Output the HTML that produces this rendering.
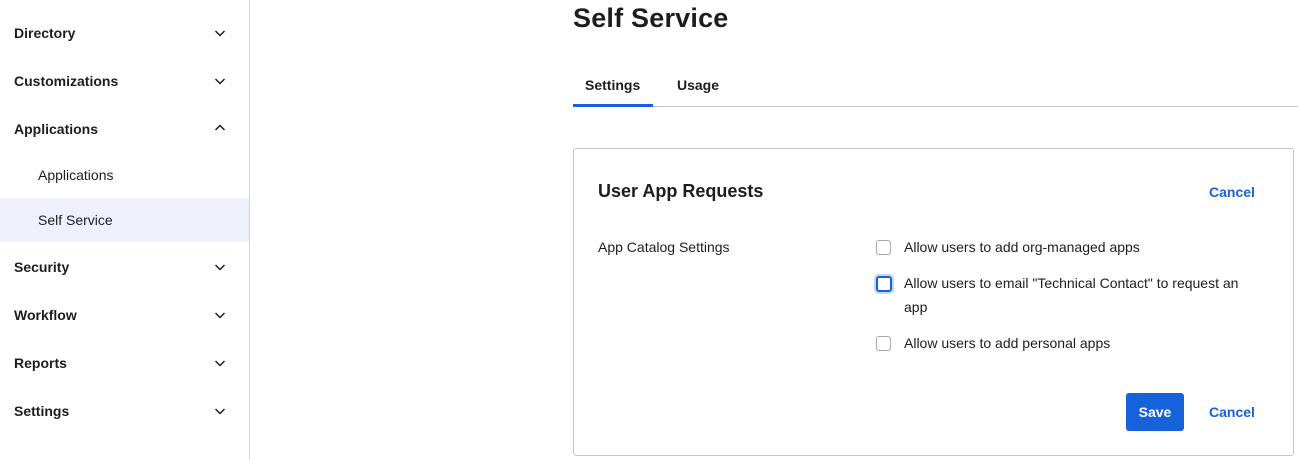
<!DOCTYPE html><html><head><style>
body{margin:0;width:1298px;height:460px;overflow:hidden;background:#fff;font-family:"Liberation Sans",sans-serif;color:#1d1d21;position:relative}
.sb{position:absolute;left:0;top:0;width:249px;height:460px;border-right:1px solid #d7d7dc}
.it{position:absolute;left:14px;font-size:14px;font-weight:bold}
.sub{position:absolute;left:38px;font-size:14px}
.ch{position:absolute;left:214px;width:12px;height:8px}
.a{position:absolute}
.cb{position:absolute;left:876px;width:13px;height:13px;border:1.5px solid #a7a7b0;border-radius:3px}
.lbl{position:absolute;left:904px;font-size:14px;line-height:24px;width:360px}
</style></head><body>
<div class="sb">
<div class="it" style="top:25px">Directory</div>
<div class="it" style="top:73px">Customizations</div>
<div class="it" style="top:121px">Applications</div>
<div class="sub" style="top:167px">Applications</div>
<div class="a" style="left:0;top:198px;width:249px;height:44px;background:#eef0fc"></div>
<div class="sub" style="top:212px">Self Service</div>
<div class="it" style="top:259px">Security</div>
<div class="it" style="top:307px">Workflow</div>
<div class="it" style="top:355px">Reports</div>
<div class="it" style="top:403px">Settings</div>
<svg class="ch" style="top:29px" viewBox="0 0 12 8"><path d="M1.5 2L6 6.5 10.5 2" fill="none" stroke="#1d1d21" stroke-width="1.5"/></svg>
<svg class="ch" style="top:77px" viewBox="0 0 12 8"><path d="M1.5 2L6 6.5 10.5 2" fill="none" stroke="#1d1d21" stroke-width="1.5"/></svg>
<svg class="ch" style="top:124px" viewBox="0 0 12 8"><path d="M1.5 6L6 1.5 10.5 6" fill="none" stroke="#1d1d21" stroke-width="1.5"/></svg>
<svg class="ch" style="top:263px" viewBox="0 0 12 8"><path d="M1.5 2L6 6.5 10.5 2" fill="none" stroke="#1d1d21" stroke-width="1.5"/></svg>
<svg class="ch" style="top:311px" viewBox="0 0 12 8"><path d="M1.5 2L6 6.5 10.5 2" fill="none" stroke="#1d1d21" stroke-width="1.5"/></svg>
<svg class="ch" style="top:359px" viewBox="0 0 12 8"><path d="M1.5 2L6 6.5 10.5 2" fill="none" stroke="#1d1d21" stroke-width="1.5"/></svg>
<svg class="ch" style="top:407px" viewBox="0 0 12 8"><path d="M1.5 2L6 6.5 10.5 2" fill="none" stroke="#1d1d21" stroke-width="1.5"/></svg>
</div>
<div class="a" style="left:573px;top:3px;font-size:27px;font-weight:bold;letter-spacing:0.2px">Self Service</div>
<div class="a" style="left:585px;top:77px;font-size:14px;font-weight:bold">Settings</div>
<div class="a" style="left:677px;top:77px;font-size:14px;font-weight:bold">Usage</div>
<div class="a" style="left:573px;top:106px;width:725px;height:1px;background:#c4c4cb"></div>
<div class="a" style="left:573px;top:104px;width:80px;height:3px;background:#1662dd"></div>
<div class="a" style="left:573px;top:148px;width:719px;height:306px;border:1px solid #c4c4cb;border-radius:3px"></div>
<div class="a" style="left:598px;top:181px;font-size:18px;font-weight:bold">User App Requests</div>
<div class="a" style="left:1209px;top:184px;font-size:14px;font-weight:bold;color:#1662dd">Cancel</div>
<div class="a" style="left:598px;top:239px;font-size:14px">App Catalog Settings</div>
<div class="cb" style="top:240px"></div>
<div class="lbl" style="top:235px">Allow users to add org-managed apps</div>
<div class="cb" style="top:276px;border:2px solid #1662dd;box-shadow:0 0 0 2px #c5d3f5;width:12px;height:12px"></div>
<div class="lbl" style="top:271px">Allow users to email "Technical Contact" to request an app</div>
<div class="cb" style="top:336px"></div>
<div class="lbl" style="top:331px">Allow users to add personal apps</div>
<div class="a" style="left:1126px;top:393px;width:58px;height:38px;background:#1662dd;border-radius:3px;color:#fff;font-size:14px;font-weight:bold;text-align:center;line-height:38px">Save</div>
<div class="a" style="left:1209px;top:404px;font-size:14px;font-weight:bold;color:#1662dd">Cancel</div>
</body></html>
